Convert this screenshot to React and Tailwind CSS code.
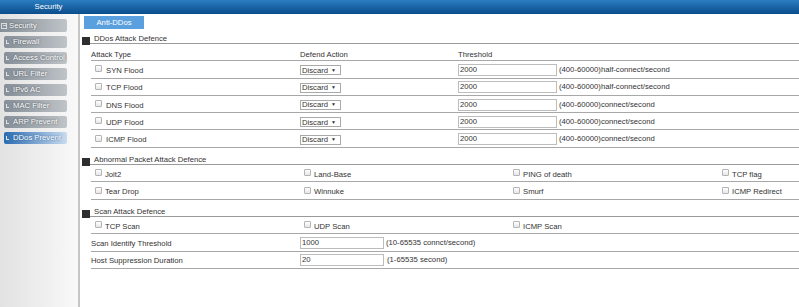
import React from 'react'

const menu = ['Firewall', 'Access Control', 'URL Filter', 'IPv6 AC', 'MAC Filter', 'ARP Prevent', 'DDos Prevent']

const floods = [
  ['SYN Flood', '(400-60000)half-connect/second'],
  ['TCP Flood', '(400-60000)half-connect/second'],
  ['DNS Flood', '(400-60000)connect/second'],
  ['UDP Flood', '(400-60000)connect/second'],
  ['ICMP Flood', '(400-60000)connect/second'],
]

const abnormal = [
  ['Jolt2', 'Land-Base', 'PING of death', 'TCP flag'],
  ['Tear Drop', 'Winnuke', 'Smurf', 'ICMP Redirect'],
]

function Box() {
  return (
    <span className="inline-block w-[7px] h-[7px] shrink-0 border border-[#b4b4b4] rounded-[1px] bg-gradient-to-b from-white to-[#e6e6e6] mb-[1px]" />
  )
}

function Check({ label, gap = 'gap-[3px]' }) {
  return (
    <div className={`flex items-center pl-[4px] ${gap}`}>
      <Box />
      <span className="pt-[3px]">{label}</span>
    </div>
  )
}

function Section({ title, tall }) {
  return (
    <div className={`flex items-end ml-[2px] ${tall ? 'h-[15px]' : 'h-[17.3px]'}`}>
      <span className="w-[8px] h-[8px] bg-[#2e2e2e] mb-[-1px] shrink-0" />
      <div className="flex-1 h-full border-b border-[#9a9a9a] pl-[4px] flex items-end leading-none">
        {title}
      </div>
    </div>
  )
}

function Row({ cols, children }) {
  return <div className={`ml-[11px] h-[17.3px] border-b border-[#a8a8a8] grid items-center ${cols}`}>{children}</div>
}

export default function App() {
  return (
    <div className="w-[799px] h-[307px] overflow-hidden bg-white text-[7.7px] text-[#333] font-['Liberation_Sans',Arial,sans-serif]">
      <div className="h-[14px] bg-gradient-to-b from-[#2a7ec1] to-[#0b4c8c] flex items-center">
        <span className="w-[97px] text-center text-white">Security</span>
      </div>

      <div className="flex h-[293px]">
        <aside className="w-[80px] shrink-0 border-r-2 border-[#c6c6c6] bg-gradient-to-r from-[#e2e2e2] to-[#f9f9f9] pt-[5px] flex flex-col gap-[4px]">
          <div className="w-[67px] h-[13px] rounded-r-[2px] bg-gradient-to-r from-[#858e97] to-[#bfc4c8] flex items-center pl-[1px] text-white whitespace-nowrap [text-shadow:0_0_2px_#3a3f44]">
            <span className="w-[6px] h-[6px] border border-[#dcdcdc] flex items-center justify-center mr-[2px]">
              <span className="w-[3px] h-px bg-[#dcdcdc]" />
            </span>
            <span>Security</span>
          </div>
          {menu.map(m => (
            <div
              key={m}
              className={`ml-[4px] w-[63px] h-[12px] rounded-[2px] flex items-center pl-[2px] text-white whitespace-nowrap ${
                m === 'DDos Prevent'
                  ? 'bg-gradient-to-r from-[#266bb0] to-[#c9dcee] [text-shadow:0_0_2px_#1d4f85]'
                  : 'bg-gradient-to-r from-[#858e97] to-[#bfc4c8] [text-shadow:0_0_2px_#3a3f44]'
              }`}
            >
              <span className="w-[3px] h-[4px] shrink-0 border-l border-b border-[#e4e4e4] mr-[4px] mb-[1px]" />
              <span>{m}</span>
            </div>
          ))}
        </aside>

        <main className="flex-1 min-w-0">
          <div className="ml-[4px] mt-[2px] w-[60px] h-[13px] bg-[#5ba0de] text-white flex items-center justify-center">Anti-DDos</div>

          <Section title="DDos Attack Defence" tall />
          <Row cols="grid-cols-[209px_158px_1fr]">
            <span className="pt-[5px]">Attack Type</span>
            <span className="pt-[5px]">Defend Action</span>
            <span className="pt-[5px]">Threshold</span>
          </Row>
          {floods.map(([name, unit]) => (
            <Row key={name} cols="grid-cols-[209px_158px_1fr]">
              <Check label={name} gap="gap-[4px]" />
              <div className="w-[41px] h-[10px] mt-[2px] border border-[#a9a9a9] bg-white flex items-center justify-between pl-[1px] pr-[4px]">
                <span>Discard</span>
                <span className="text-[5px]">▼</span>
              </div>
              <div className="flex items-center gap-[2px] mt-[1px]">
                <div className="w-[99px] h-[12px] border border-[#bdbdbd] flex items-center pl-[1px]">2000</div>
                <span>{unit}</span>
              </div>
            </Row>
          ))}

          <Section title="Abnormal Packet Attack Defence" />
          {abnormal.map(r => (
            <Row key={r[0]} cols="grid-cols-[209px_209px_209px_1fr]">
              {r.map(c => <Check key={c} label={c} />)}
            </Row>
          ))}

          <Section title="Scan Attack Defence" />
          <Row cols="grid-cols-[209px_209px_209px_1fr]">
            <Check label="TCP Scan" />
            <Check label="UDP Scan" />
            <Check label="ICMP Scan" />
          </Row>
          <Row cols="grid-cols-[209px_1fr]">
            <span className="pt-[2px]">Scan Identify Threshold</span>
            <div className="flex items-center gap-[2px] mt-[1px]">
              <div className="w-[84px] h-[12px] border border-[#bdbdbd] flex items-center pl-[1px]">1000</div>
              <span>(10-65535 connct/second)</span>
            </div>
          </Row>
          <Row cols="grid-cols-[209px_1fr]">
            <span className="pt-[2px]">Host Suppression Duration</span>
            <div className="flex items-center gap-[3px] mt-[1px]">
              <div className="w-[84px] h-[12px] border border-[#bdbdbd] flex items-center pl-[1px]">20</div>
              <span>(1-65535 second)</span>
            </div>
          </Row>
        </main>
      </div>
    </div>
  )
}
